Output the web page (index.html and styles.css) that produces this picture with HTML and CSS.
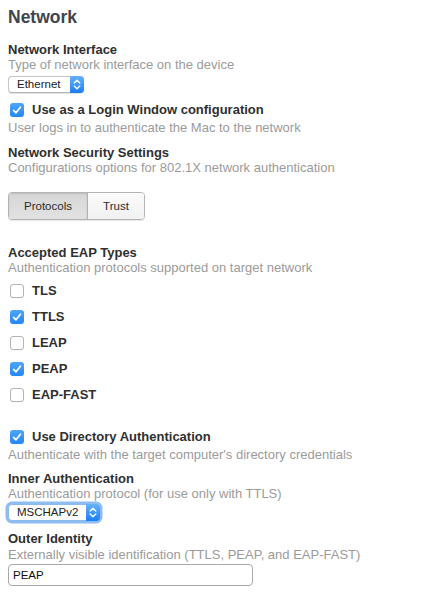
FILE: index.html
```html
<!DOCTYPE html>
<html>
<head>
<meta charset="utf-8">
<title>Network</title>
<link rel="stylesheet" href="styles.css">
</head>
<body>
<main class="panel">
  <h1 class="title">Network</h1>

  <div class="label mt-14">Network Interface</div>
  <div class="desc">Type of network interface on the device</div>
  <div class="popup popup-eth mt-3">
    <span class="popup-text">Ethernet</span>
    <span class="popup-arrows"><svg width="14" height="17" viewBox="0 0 14 17"><path d="M4.2 7 L7 4.2 L9.8 7 M4.2 10 L7 12.8 L9.8 10" fill="none" stroke="#fff" stroke-width="1.3" stroke-linecap="round" stroke-linejoin="round"/></svg></span>
  </div>

  <div class="check-row mt-9">
    <span class="box on"><svg width="14" height="14" viewBox="0 0 14 14"><path d="M3.6 7.3 L6 9.8 L10.4 4.2" fill="none" stroke="#fff" stroke-width="1.7" stroke-linecap="round" stroke-linejoin="round"/></svg></span>
    <span class="check-label">Use as a Login Window configuration</span>
  </div>
  <div class="desc mt-2">User logs in to authenticate the Mac to the network</div>

  <div class="label mt-9">Network Security Settings</div>
  <div class="desc">Configurations options for 802.1X network authentication</div>

  <div class="segmented mt-16">
    <span class="seg seg-protocols selected">Protocols</span>
    <span class="seg seg-trust">Trust</span>
  </div>

  <div class="label mt-25">Accepted EAP Types</div>
  <div class="desc">Authentication protocols supported on target network</div>

  <div class="check-list mt-7">
    <div class="check-row">
      <span class="box"></span>
      <span class="check-label">TLS</span>
    </div>
    <div class="check-row">
      <span class="box on"><svg width="14" height="14" viewBox="0 0 14 14"><path d="M3.6 7.3 L6 9.8 L10.4 4.2" fill="none" stroke="#fff" stroke-width="1.7" stroke-linecap="round" stroke-linejoin="round"/></svg></span>
      <span class="check-label">TTLS</span>
    </div>
    <div class="check-row">
      <span class="box"></span>
      <span class="check-label">LEAP</span>
    </div>
    <div class="check-row">
      <span class="box on"><svg width="14" height="14" viewBox="0 0 14 14"><path d="M3.6 7.3 L6 9.8 L10.4 4.2" fill="none" stroke="#fff" stroke-width="1.7" stroke-linecap="round" stroke-linejoin="round"/></svg></span>
      <span class="check-label">PEAP</span>
    </div>
    <div class="check-row">
      <span class="box"></span>
      <span class="check-label">EAP-FAST</span>
    </div>
  </div>

  <div class="check-row mt-26">
    <span class="box on"><svg width="14" height="14" viewBox="0 0 14 14"><path d="M3.6 7.3 L6 9.8 L10.4 4.2" fill="none" stroke="#fff" stroke-width="1.7" stroke-linecap="round" stroke-linejoin="round"/></svg></span>
    <span class="check-label">Use Directory Authentication</span>
  </div>
  <div class="desc mt-2">Authenticate with the target computer's directory credentials</div>

  <div class="label mt-8">Inner Authentication</div>
  <div class="desc">Authentication protocol (for use only with TTLS)</div>
  <div class="popup popup-inner focused mt-2">
    <span class="popup-text">MSCHAPv2</span>
    <span class="popup-arrows"><svg width="14" height="17" viewBox="0 0 14 17"><path d="M4.2 7 L7 4.2 L9.8 7 M4.2 10 L7 12.8 L9.8 10" fill="none" stroke="#fff" stroke-width="1.3" stroke-linecap="round" stroke-linejoin="round"/></svg></span>
  </div>

  <div class="label mt-10">Outer Identity</div>
  <div class="desc mt-1">Externally visible identification (TTLS, PEAP, and EAP-FAST)</div>
  <input class="text-field mt-1" type="text" value="PEAP" readonly>
</main>
</body>
</html>
```

FILE: styles.css
```css
html, body {
  margin: 0;
  padding: 0;
  background: #ffffff;
}

body {
  font-family: "Liberation Sans", Arial, sans-serif;
  font-size: 13px;
  color: #333333;
}

.panel {
  display: flex;
  flex-direction: column;
  align-items: flex-start;
  padding: 6px 8px 0 8px;
}

.title {
  margin: 0;
  font-size: 17.5px;
  line-height: 22px;
  font-weight: bold;
  color: #40454c;
}

.label {
  font-weight: bold;
  font-size: 13px;
  line-height: 15px;
  color: #2f2f2f;
}

.desc {
  font-size: 13px;
  line-height: 16px;
  color: #9b9b9b;
}

.mt-1 { margin-top: 1px; }
.mt-2 { margin-top: 2px; }
.mt-3 { margin-top: 3px; }
.mt-7 { margin-top: 7px; }
.mt-8 { margin-top: 8px; }
.mt-9 { margin-top: 9px; }
.mt-10 { margin-top: 10px; }
.mt-14 { margin-top: 14px; }
.mt-16 { margin-top: 16px; }
.mt-25 { margin-top: 25px; }
.mt-26 { margin-top: 26px; }

/* Popup buttons */
.popup {
  box-sizing: border-box;
  height: 17px;
  display: flex;
  align-items: stretch;
  background: #ffffff;
  border: 1px solid #c6c6c6;
  border-bottom-color: #b4b4b4;
  border-radius: 4px;
  box-shadow: 0 0.5px 1px rgba(0, 0, 0, 0.12);
}

.popup-eth { width: 76px; }
.popup-inner { width: 92px; }

.popup.focused {
  border-color: #8db8ea;
  box-shadow: 0 0 0 2.5px #8ebdf3;
}

.popup-text {
  flex: 1;
  padding-left: 8px;
  font-size: 11.5px;
  line-height: 15px;
  color: #222222;
}

.popup-arrows {
  width: 14px;
  display: flex;
  align-items: center;
  justify-content: center;
  margin: -1px -1px -1px 0;
  border-radius: 0 4px 4px 0;
  background: linear-gradient(#69b1fa, #1a7ef5);
}

.popup-arrows svg {
  display: block;
}

/* Checkboxes */
.check-list {
  display: flex;
  flex-direction: column;
  gap: 10px;
}

.check-row {
  display: flex;
  align-items: center;
  height: 16px;
}

.box {
  box-sizing: border-box;
  width: 14px;
  height: 14px;
  margin-left: 2px;
  margin-right: 8px;
  border-radius: 3px;
  background: #ffffff;
  border: 1px solid #b5b5b5;
  box-shadow: 0 0.5px 0.5px rgba(0, 0, 0, 0.06);
  display: flex;
  align-items: center;
  justify-content: center;
}

.box.on {
  border: none;
  background: linear-gradient(#4ea6fb, #2287f8);
}

.box svg {
  display: block;
}

.check-label {
  font-weight: bold;
  font-size: 13px;
  line-height: 16px;
  color: #2f2f2f;
}

/* Segmented control */
.segmented {
  box-sizing: border-box;
  height: 28px;
  display: flex;
  border: 1px solid #b4b4b4;
  border-radius: 4px;
  overflow: hidden;
  box-shadow: 0 0.5px 1px rgba(0, 0, 0, 0.1);
}

.seg {
  display: flex;
  align-items: center;
  justify-content: center;
  font-size: 11.5px;
  color: #2a2a2a;
  background: linear-gradient(#fbfbfb, #f1f1f1);
}

.seg-protocols {
  width: 78px;
  border-right: 1px solid #b0b0b0;
}

.seg-trust {
  width: 56px;
}

.seg.selected {
  background: linear-gradient(#d6d6d6, #e2e2e2);
  box-shadow: inset 0 1px 2px rgba(0, 0, 0, 0.12);
}

/* Text field */
.text-field {
  box-sizing: border-box;
  width: 245px;
  height: 22px;
  margin-left: 0;
  margin-right: 0;
  margin-bottom: 0;
  padding: 0 0 0 4px;
  border: 1px solid #a9a9a9;
  border-radius: 4px;
  background: #ffffff;
  font-family: "Liberation Sans", Arial, sans-serif;
  font-size: 11.5px;
  color: #111111;
  outline: none;
}
```
